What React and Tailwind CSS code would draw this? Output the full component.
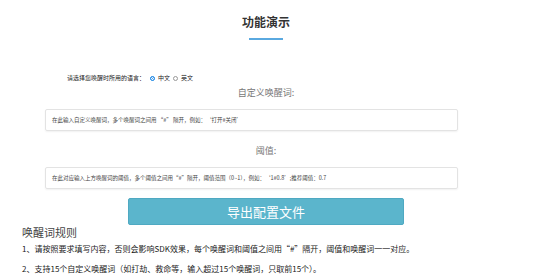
export default function App() {
  const font = { fontFamily: '"Noto Sans CJK SC", "Noto Sans", sans-serif' }
  return (
    <div className="w-[554px] h-[280px] overflow-hidden bg-white" style={font}>
      <div className="w-[532px] flex flex-col">
        <h1 className="mt-[13px] text-center text-[12px] leading-[18px] font-bold text-[#333]">功能演示</h1>
        <div className="mx-auto mt-[7px] w-[34px] h-[2px] bg-[#5aa9e0]" />

        <div className="ml-[67px] mt-[33px] flex items-center gap-[3px] text-[6px] leading-[10px] text-[#222]">
          <span>请选择您唤醒时所用的语言：</span>
          <span className="ml-[2px] w-[5px] h-[5px] rounded-full border border-[#1e88e5] bg-[#1e88e5] ring-1 ring-inset ring-white" />
          <span>中文</span>
          <span className="w-[5px] h-[5px] rounded-full border border-[#999] bg-white" />
          <span>英文</span>
        </div>

        <div className="mt-[4px] text-center text-[9px] leading-[12px] text-[#777]">自定义唤醒词:</div>

        <div className="ml-[45px] mt-[10px] w-[413px] h-[22px] flex items-center px-[6px] border border-[#e3e3e3] rounded-[2px] shadow-[0_1px_2px_rgba(0,0,0,0.06)] text-[5.5px] text-[#444]">
          在此输入自定义唤醒词，多个唤醒词之间用 “#” 隔开，例如：‘打开#关闭’
        </div>

        <div className="mt-[14px] text-center text-[9px] leading-[12px] text-[#777]">阈值:</div>

        <div className="ml-[45px] mt-[10px] w-[413px] h-[22px] flex items-center px-[6px] border border-[#e3e3e3] rounded-[2px] shadow-[0_1px_2px_rgba(0,0,0,0.06)] text-[5.5px] text-[#444]">
          在此对应输入上方唤醒词的阈值，多个阈值之间用“#”隔开，阈值范围（0~1），例如：‘1#0.8’;推荐阈值：0.7
        </div>

        <button className="mx-auto mt-[9px] w-[276px] h-[27px] flex items-center justify-center bg-[#5bb5cc] border border-[#4fa9c2] rounded-[2px] text-white text-[13px]">
          导出配置文件
        </button>
      </div>

      <div className="ml-[22px] mt-[0px] text-[11px] leading-[14px] text-[#444]">唤醒词规则</div>
      <div className="ml-[22px] mt-[4px] text-[8px] leading-[12px] text-[#222]">
        1、请按照要求填写内容，否则会影响SDK效果，每个唤醒词和阈值之间用“#”隔开，阈值和唤醒词一一对应。
      </div>
      <div className="ml-[22px] mt-[8px] text-[8px] leading-[12px] text-[#222]">
        2、支持15个自定义唤醒词（如打劫、救命等，输入超过15个唤醒词，只取前15个）。
      </div>
    </div>
  )
}
